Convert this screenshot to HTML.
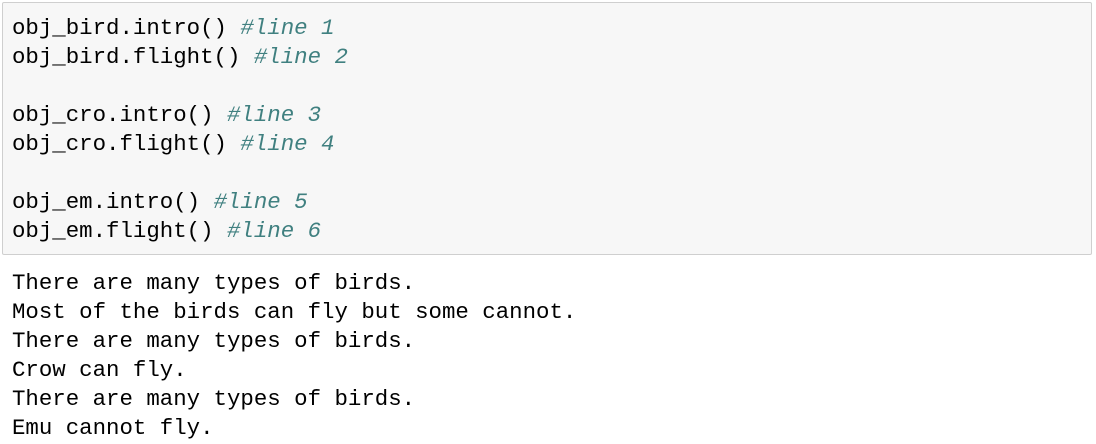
<!DOCTYPE html>
<html><head><style>
body{margin:0;background:#fff;width:1096px;height:444px;overflow:hidden}
.box{position:absolute;left:2px;top:2px;width:1088px;height:251px;background:#f7f7f7;border:1px solid #cfcfcf;border-radius:2px}
pre{margin:0;font-family:"Liberation Mono",monospace;font-size:22.4px;line-height:29px;color:#000;position:absolute;left:12px;letter-spacing:0}
.c{color:#408080;font-style:italic}
</style></head><body>
<div class="box"></div>
<pre style="top:14px">obj_bird.intro() <span class="c">#line 1</span>
obj_bird.flight() <span class="c">#line 2</span>

obj_cro.intro() <span class="c">#line 3</span>
obj_cro.flight() <span class="c">#line 4</span>

obj_em.intro() <span class="c">#line 5</span>
obj_em.flight() <span class="c">#line 6</span></pre>
<pre style="top:269px">There are many types of birds.
Most of the birds can fly but some cannot.
There are many types of birds.
Crow can fly.
There are many types of birds.
Emu cannot fly.</pre>
</body></html>
